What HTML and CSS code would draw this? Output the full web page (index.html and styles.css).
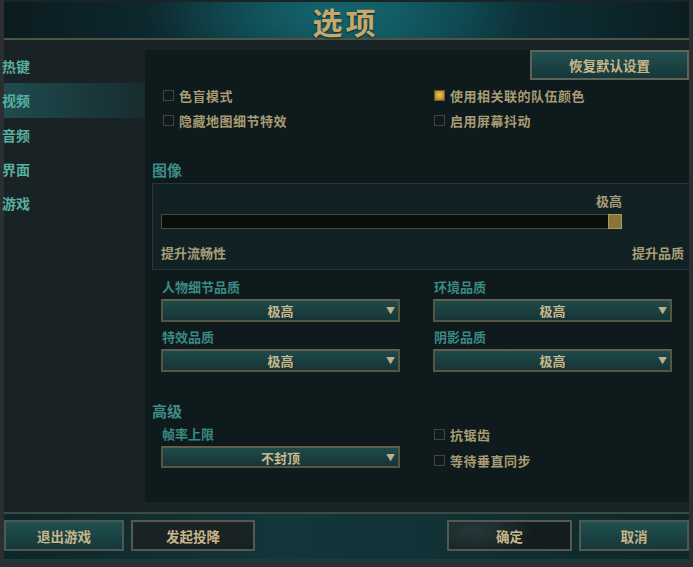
FILE: index.html
```html
<!DOCTYPE html>
<html lang="zh">
<head>
<meta charset="utf-8">
<title>选项</title>
<link rel="stylesheet" href="styles.css">
</head>
<body>
<div class="frame">
  <header class="header">
    <h1 class="title">选项</h1>
  </header>
  <div class="content">
    <nav class="sidebar">
      <div class="nav-item">热键</div>
      <div class="nav-item active">视频</div>
      <div class="nav-item">音频</div>
      <div class="nav-item">界面</div>
      <div class="nav-item">游戏</div>
    </nav>
    <main class="main">
      <div class="reset-row">
        <button class="btn btn-teal reset">恢复默认设置</button>
      </div>
      <div class="checks">
        <label class="check"><span class="box"></span>色盲模式</label>
        <label class="check"><span class="box checked"></span>使用相关联的队伍颜色</label>
        <label class="check"><span class="box"></span>隐藏地图细节特效</label>
        <label class="check"><span class="box"></span>启用屏幕抖动</label>
      </div>

      <h2 class="section">图像</h2>
      <div class="gfx">
        <div class="gfx-value">极高</div>
        <div class="slider"><span class="thumb"></span></div>
        <div class="gfx-ends">
          <span>提升流畅性</span>
          <span class="gfx-right">提升品质</span>
        </div>
      </div>

      <div class="drops">
        <div class="field">
          <div class="field-label">人物细节品质</div>
          <div class="select"><span></span><span class="select-val">极高</span><span class="arrow">▼</span></div>
        </div>
        <div class="field">
          <div class="field-label">环境品质</div>
          <div class="select"><span></span><span class="select-val">极高</span><span class="arrow">▼</span></div>
        </div>
        <div class="field">
          <div class="field-label">特效品质</div>
          <div class="select"><span></span><span class="select-val">极高</span><span class="arrow">▼</span></div>
        </div>
        <div class="field">
          <div class="field-label">阴影品质</div>
          <div class="select"><span></span><span class="select-val">极高</span><span class="arrow">▼</span></div>
        </div>
      </div>

      <h2 class="section section-adv">高级</h2>
      <div class="adv">
        <div class="field adv-field">
          <div class="field-label">帧率上限</div>
          <div class="select sel-small"><span></span><span class="select-val">不封顶</span><span class="arrow">▼</span></div>
        </div>
        <div class="adv-checks">
          <label class="check"><span class="box"></span>抗锯齿</label>
          <label class="check"><span class="box"></span>等待垂直同步</label>
        </div>
      </div>
    </main>
  </div>
  <footer class="footer">
    <div class="footer-left">
      <button class="btn btn-teal fb-quit">退出游戏</button>
      <button class="btn btn-dark fb-surr">发起投降</button>
    </div>
    <div class="footer-right">
      <button class="btn btn-dark fb-ok">确定</button>
      <button class="btn btn-teal fb-cancel">取消</button>
    </div>
  </footer>
</div>
</body>
</html>
```
FILE: styles.css
```css
* { box-sizing: border-box; }
html, body {
  margin: 0;
  padding: 0;
  background: #2c2f31;
  width: 693px;
  height: 567px;
  overflow: hidden;
  font-family: "Noto Sans CJK SC", "Noto Sans", sans-serif;
  font-weight: 700;
}
.frame {
  width: 685px;
  height: 562px;
  margin-left: 4px;
  padding-top: 2px;
  display: flex;
  flex-direction: column;
  background: #1a2325;
}
.header {
  height: 38px;
  border-bottom: 2px solid #4d5546;
  background:
    radial-gradient(ellipse 190px 60px at 48% 30%, rgba(22,110,118,0.75), rgba(22,110,118,0) 100%),
    linear-gradient(90deg, #0b1c20 0%, #0d2a30 25%, #0f4650 45%, #0f4d57 55%, #0d2f35 78%, #0b1d21 100%);
  display: flex;
  justify-content: center;
  align-items: center;
}
.title {
  margin: 2px 0 0 -2px;
  font-size: 30px;
  line-height: 34px;
  color: #c6a86a;
  letter-spacing: 3px;
  text-shadow: 0 1px 2px rgba(0,0,0,0.6);
}
.content {
  height: 474px;
  display: flex;
  background: #192224;
}
.sidebar {
  width: 141px;
  padding-top: 9px;
  display: flex;
  flex-direction: column;
}
.nav-item {
  height: 34.3px;
  line-height: 34.3px;
  font-size: 14px;
  color: #58ae9f;
  margin-left: -2px;
}
.nav-item.active {
  margin-left: 0;
  text-indent: -2px;
  background: linear-gradient(90deg, #1f4c4f 0%, #1a3a3d 55%, #182d30 100%);
}
.main {
  flex: 1;
  margin-top: 10px;
  margin-bottom: 10px;
  background: #0e1a1c;
  display: flex;
  flex-direction: column;
}
.reset-row {
  display: flex;
  justify-content: flex-end;
}
.btn {
  font-family: "Noto Sans CJK SC", "Noto Sans", sans-serif;
  font-weight: 700;
  font-size: 13.5px;
  color: #c8b68a;
  padding: 0;
  border: 2px solid #4d5a52;
  cursor: pointer;
}
.btn-teal {
  background: linear-gradient(180deg, #215050 0%, #1a4142 60%, #173739 100%);
}
.btn-dark {
  background: linear-gradient(180deg, #1c2526 0%, #172122 100%);
  border-color: #545951;
}
.reset {
  width: 159px;
  height: 30px;
  border-color: #5d6358;
}
.checks {
  margin-top: 3px;
  padding-left: 18px;
  display: grid;
  grid-template-columns: 271px 1fr;
  grid-auto-rows: 25px;
}
.check {
  display: flex;
  align-items: center;
  font-size: 13px;
  color: #a89c74;
  letter-spacing: 0.5px;
}
.box {
  width: 11px;
  height: 11px;
  border: 1px solid #3c4540;
  background: #111a19;
  margin-right: 5px;
  flex: none;
}
.box.checked {
  background: radial-gradient(circle at 50% 45%, #f0c45a 0%, #c0912e 70%, #8d6a24 100%);
  border-color: #6a5a30;
}
.section {
  margin: 27px 0 0 7px;
  height: 20px;
  line-height: 20px;
  font-size: 15px;
  color: #3d8c86;
}
.gfx {
  margin: 3px 0 0 7px;
  height: 87px;
  border: 1px solid #25373a;
  border-right: none;
  background: #112124;
  padding: 8px 0 0 8px;
}
.gfx-value {
  width: 461px;
  text-align: right;
  height: 17px;
  line-height: 17px;
  font-size: 13px;
  color: #a99d77;
}
.slider {
  margin-top: 5px;
  width: 461px;
  height: 15px;
  background: #090e0b;
  border: 1px solid #4a4b3b;
  display: flex;
  justify-content: flex-end;
}
.thumb {
  width: 14px;
  height: 15px;
  margin: -1px -1px 0 0;
  background: #8b733a;
  border: 1px solid #a99860;
}
.gfx-ends {
  margin-top: 15px;
  display: flex;
  justify-content: space-between;
  height: 17px;
  line-height: 17px;
  font-size: 13px;
  color: #a99d77;
  padding-right: 5px;
}
.drops {
  margin-top: 8px;
  padding-left: 16px;
  display: grid;
  grid-template-columns: 239px 239px;
  column-gap: 33px;
  row-gap: 6px;
}
.field-label {
  height: 17px;
  line-height: 17px;
  font-size: 13px;
  color: #3b8a82;
  padding-left: 1px;
}
.select {
  margin-top: 4px;
  height: 23px;
  border: 2px solid #545644;
  border-top-color: #5f5f4b;
  background: linear-gradient(180deg, #1f4a4a 0%, #1a3d3e 60%, #163435 100%);
  display: grid;
  grid-template-columns: 16px 1fr 16px;
  align-items: center;
}
.select-val {
  text-align: center;
  font-size: 13px;
  color: #c9b88c;
}
.arrow {
  font-size: 9px;
  color: #bfb08a;
  line-height: 1;
  text-align: right;
  padding-right: 3px;
}
.sel-small {
  height: 22px;
}
.section-adv {
  margin-top: 29px;
}
.adv {
  padding-left: 16px;
  display: grid;
  grid-template-columns: 239px 1fr;
  column-gap: 33px;
}
.adv-field {
  margin-top: 4px;
}
.adv-checks {
  margin-top: 0;
  padding-left: 1px;
  display: grid;
  grid-auto-rows: 26px;
}
.footer {
  height: 50px;
  border-top: 2px solid #3b4a43;
  background: linear-gradient(90deg, #0f2528 0%, #12363a 40%, #113236 60%, #0f2629 100%);
  display: flex;
  justify-content: space-between;
  padding-top: 6px;
  border-bottom: 3px solid #1b3a3d;
}
.footer-left, .footer-right {
  display: flex;
  gap: 7px;
}
.footer .btn {
  height: 31px;
}
.fb-quit { width: 120px; }
.fb-surr { width: 124px; }
.fb-ok { width: 125px; background: radial-gradient(ellipse 60px 30px at 20% 30%, #26393a 0%, #141d1e 100%); }
.fb-cancel { width: 110px; }
```
